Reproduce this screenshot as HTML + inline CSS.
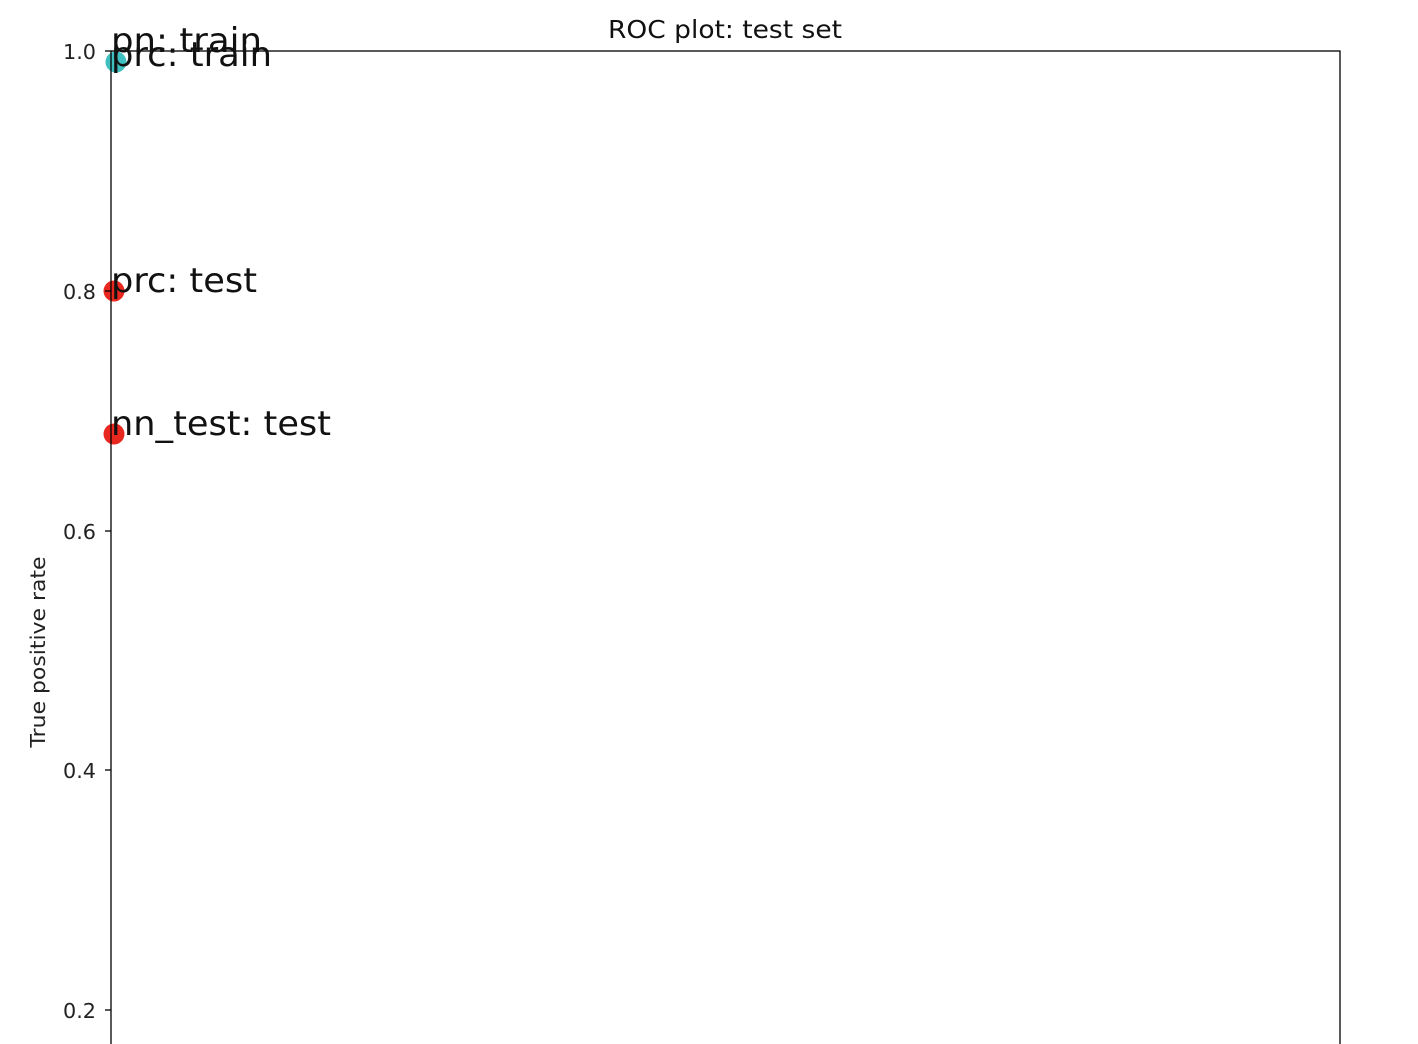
<!DOCTYPE html>
<html><head><meta charset="utf-8"><style>html,body{margin:0;padding:0;background:#fff;width:1418px;height:1044px;overflow:hidden}</style></head>
<body>
<svg width="1418" height="1044" xmlns="http://www.w3.org/2000/svg" style="font-family:'DejaVu Sans','Liberation Sans',sans-serif">
<rect width="1418" height="1044" fill="#fff"/>
<circle cx="116" cy="62" r="10.5" fill="#3fbfbf"/>
<circle cx="114" cy="291" r="10.5" fill="#e8281e"/>
<circle cx="114" cy="434" r="10.5" fill="#e8281e"/>
<rect x="111" y="51" width="1229" height="1010" fill="none" stroke="#000" stroke-width="1.3"/>
<g stroke="#000" stroke-width="1.3">
<line x1="105" y1="51" x2="111" y2="51"/>
<line x1="105" y1="291" x2="111" y2="291"/>
<line x1="105" y1="531" x2="111" y2="531"/>
<line x1="105" y1="770" x2="111" y2="770"/>
<line x1="105" y1="1010" x2="111" y2="1010"/>
</g>
<g font-size="20" fill="#222" text-anchor="end">
<text x="96" y="59" textLength="33" lengthAdjust="spacingAndGlyphs">1.0</text>
<text x="96" y="299" textLength="33" lengthAdjust="spacingAndGlyphs">0.8</text>
<text x="96" y="539" textLength="33" lengthAdjust="spacingAndGlyphs">0.6</text>
<text x="96" y="778" textLength="33" lengthAdjust="spacingAndGlyphs">0.4</text>
<text x="96" y="1018" textLength="33" lengthAdjust="spacingAndGlyphs">0.2</text>
</g>
<text x="725" y="38" font-size="25" text-anchor="middle" fill="#111" textLength="234" lengthAdjust="spacingAndGlyphs">ROC plot: test set</text>
<text transform="translate(45,652) rotate(-90)" font-size="20" text-anchor="middle" fill="#222" textLength="191" lengthAdjust="spacingAndGlyphs">True positive rate</text>
<g font-size="34" fill="#111">
<text x="111" y="52" textLength="151" lengthAdjust="spacingAndGlyphs">pn: train</text>
<text x="111" y="66" textLength="161" lengthAdjust="spacingAndGlyphs">prc: train</text>
<text x="111" y="292" textLength="146" lengthAdjust="spacingAndGlyphs">prc: test</text>
<text x="111" y="435" textLength="220" lengthAdjust="spacingAndGlyphs">nn_test: test</text>
</g>
</svg>
</body></html>
